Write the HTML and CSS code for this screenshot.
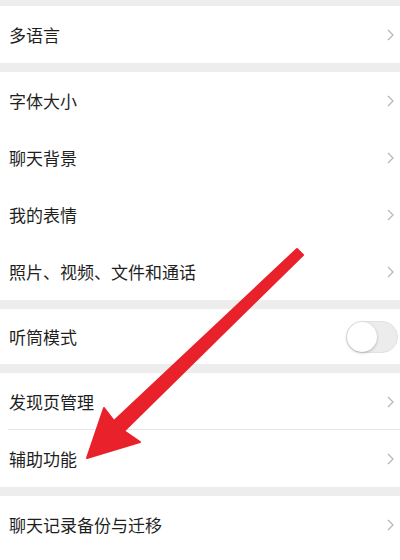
FILE: index.html
```html
<!DOCTYPE html>
<html lang="zh-CN">
<head>
<meta charset="utf-8">
<title>设置</title>
<link rel="stylesheet" href="styles.css">
</head>
<body>
<div class="page">
  <div class="group g-first">
    <div class="row"><span class="label">多语言</span><svg class="chev" viewBox="0 0 7 12"><path d="M1 1l5 5-5 5"/></svg></div>
  </div>
  <div class="group">
    <div class="row"><span class="label">字体大小</span><svg class="chev" viewBox="0 0 7 12"><path d="M1 1l5 5-5 5"/></svg></div>
    <div class="row"><span class="label">聊天背景</span><svg class="chev" viewBox="0 0 7 12"><path d="M1 1l5 5-5 5"/></svg></div>
    <div class="row"><span class="label">我的表情</span><svg class="chev" viewBox="0 0 7 12"><path d="M1 1l5 5-5 5"/></svg></div>
    <div class="row"><span class="label">照片、视频、文件和通话</span><svg class="chev" viewBox="0 0 7 12"><path d="M1 1l5 5-5 5"/></svg></div>
  </div>
  <div class="group">
    <div class="row row-short"><span class="label">听筒模式</span><span class="switch"><span class="knob"></span></span></div>
  </div>
  <div class="group">
    <div class="row sep"><span class="label">发现页管理</span><svg class="chev" viewBox="0 0 7 12"><path d="M1 1l5 5-5 5"/></svg></div>
    <div class="row"><span class="label">辅助功能</span><svg class="chev" viewBox="0 0 7 12"><path d="M1 1l5 5-5 5"/></svg></div>
  </div>
  <div class="group g-last">
    <div class="row"><span class="label">聊天记录备份与迁移</span><svg class="chev" viewBox="0 0 7 12"><path d="M1 1l5 5-5 5"/></svg></div>
  </div>
  <svg class="arrow" viewBox="0 0 400 560" width="400" height="560">
    <polygon points="297,249 303,255 124,431 140,442 87,458 104,408 114,421" />
  </svg>
</div>
</body>
</html>
```
FILE: styles.css
```css
html, body {
  margin: 0;
  padding: 0;
  background: #ededed;
}
body {
  font-family: "Noto Sans CJK SC", "Noto Sans", sans-serif;
  color: #1f1f1f;
}
.page {
  position: relative;
  width: 400px;
  height: 560px;
  overflow: hidden;
  padding-top: 6px;
  box-sizing: border-box;
  display: flex;
  flex-direction: column;
  gap: 9px;
}
.group {
  background: #fff;
  display: flex;
  flex-direction: column;
}
.g-last {
  flex: 1;
}
.row {
  height: 57px;
  display: flex;
  align-items: center;
  justify-content: space-between;
  padding: 0 6px 0 9px;
  box-sizing: border-box;
  position: relative;
}
.row-short {
  height: 55px;
  padding-right: 2px;
}
.sep::after {
  content: "";
  position: absolute;
  left: 8px;
  right: 0;
  bottom: 0;
  height: 1px;
  background: #e6e6e6;
}
.label {
  font-size: 17px;
  line-height: 1;
  letter-spacing: 0;
}
.chev {
  width: 7px;
  height: 12px;
  fill: none;
  stroke: #b8b8b8;
  stroke-width: 1.3;
}
.switch {
  width: 52px;
  height: 32px;
  border-radius: 16px;
  background: #ececec;
  border: 1px solid #e2e2e2;
  box-sizing: border-box;
  position: relative;
  display: block;
}
.knob {
  position: absolute;
  left: 0;
  top: 0;
  width: 30px;
  height: 30px;
  border-radius: 50%;
  background: #fff;
  box-shadow: 0 1px 3px rgba(0,0,0,0.25);
}
.arrow {
  position: absolute;
  left: 0;
  top: 0;
  pointer-events: none;
}
.arrow polygon {
  fill: #e8212b;
  stroke: #e8212b;
  stroke-width: 2;
  stroke-linejoin: round;
}
```
